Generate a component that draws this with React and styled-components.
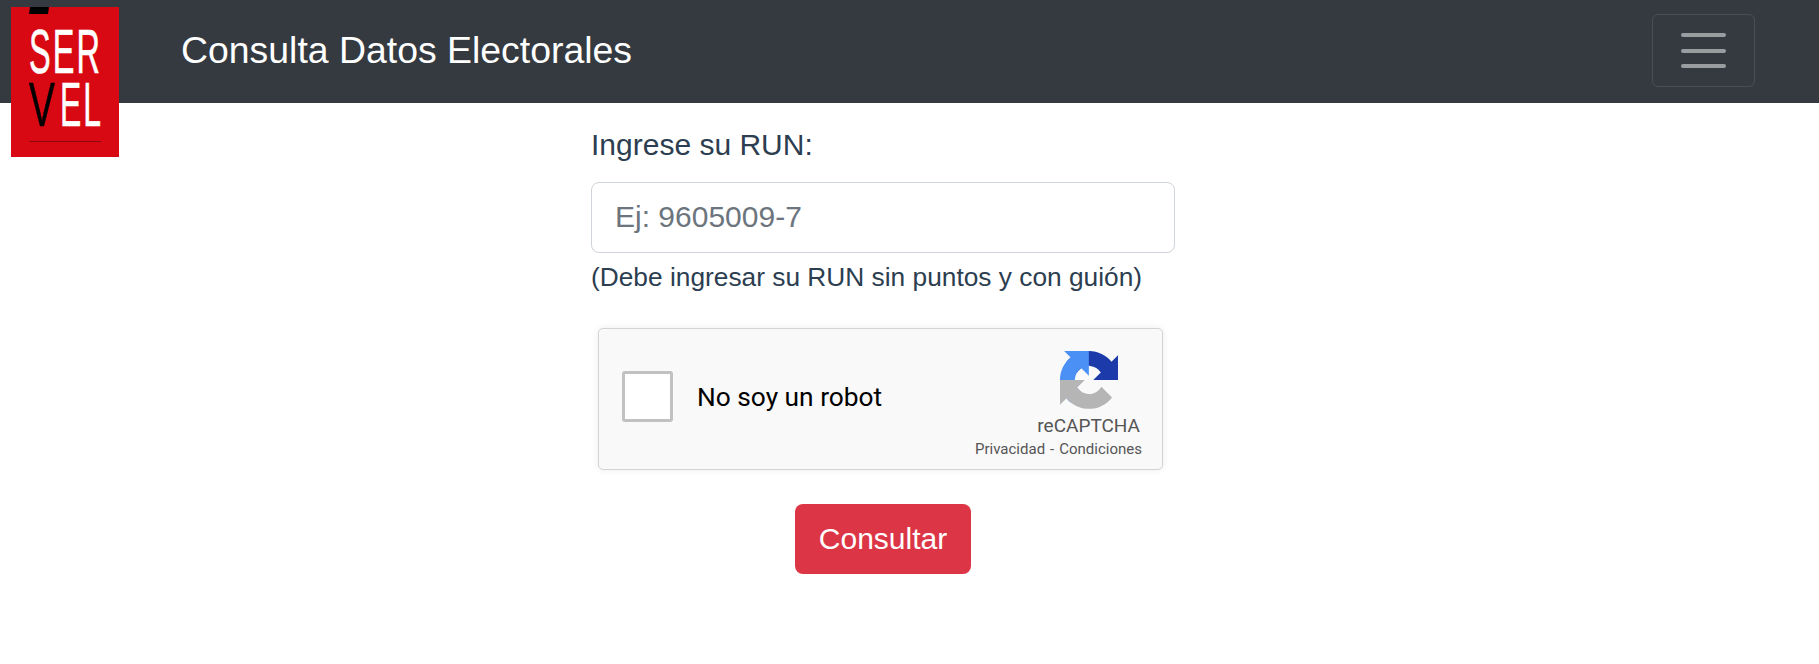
import React from "react";
import styled, { createGlobalStyle } from "styled-components";

const GlobalStyle = createGlobalStyle`
	html, body {
		margin: 0;
		background: #ffffff;
		font-family: "Liberation Sans", Arial, sans-serif;
		color: #2c3e50;
	}
`;

const Navbar = styled.nav`
	display: flex;
	align-items: center;
	height: 103px;
	padding-left: 11px;
	background: #343a40;
`;

const LogoBox = styled.svg`
	align-self: flex-start;
	flex: none;
	width: 108px;
	height: 150px;
	margin-top: 7px;
	position: relative;
`;

const LogoText = styled.text`
	font-family: "Liberation Sans Narrow", "Liberation Sans", sans-serif;
	font-size: 63px;
	letter-spacing: ${(props) => props.$spacing || 0}px;
	fill: ${(props) => (props.$dark ? "#000000" : "#ffffff")};
	stroke: ${(props) => (props.$dark ? "#000000" : "#ffffff")};
	stroke-width: 0.6px;
`;

const Brand = styled.div`
	margin-left: 62px;
	margin-bottom: 2px;
	color: #ffffff;
	font-size: 37.4px;
	white-space: nowrap;
`;

const Toggler = styled.button`
	display: flex;
	flex-direction: column;
	justify-content: center;
	align-items: center;
	gap: 11.5px;
	width: 103px;
	height: 73px;
	margin-left: auto;
	margin-right: 64px;
	margin-bottom: 2px;
	padding: 0;
	background: transparent;
	border: 1px solid rgba(255, 255, 255, 0.1);
	border-radius: 6px;
`;

const TogglerBar = styled.span`
	display: block;
	width: 45px;
	height: 4px;
	border-radius: 2px;
	background: rgba(255, 255, 255, 0.5);
`;

const Main = styled.main`
	display: flex;
	flex-direction: column;
	width: 584px;
	margin-left: 591px;
	padding-top: 23px;
`;

const Label = styled.label`
	font-size: 30px;
	line-height: 38px;
`;

const RunInput = styled.input`
	box-sizing: border-box;
	width: 100%;
	height: 71px;
	margin-top: 18px;
	padding: 0 23px 2px;
	border: 1px solid #ced4da;
	border-radius: 8px;
	font-family: inherit;
	font-size: 30px;
	color: #495057;
	&::placeholder {
		color: #6c757d;
		opacity: 1;
	}
`;

const Help = styled.div`
	margin-top: 6px;
	font-size: 26.3px;
	line-height: 36px;
`;

const Captcha = styled.div`
	box-sizing: border-box;
	display: flex;
	align-items: center;
	width: 565px;
	height: 142px;
	margin: 33px 0 0 7px;
	padding-left: 23px;
	background: #f9f9f9;
	border: 1px solid #d3d3d3;
	border-radius: 5px;
	box-shadow: 0 0 7px rgba(0, 0, 0, 0.08);
	font-family: Roboto, sans-serif;
`;

const CaptchaBox = styled.div`
	box-sizing: border-box;
	flex: none;
	width: 51px;
	height: 51px;
	margin-bottom: 6px;
	background: #ffffff;
	border: 3px solid #c1c1c1;
	border-radius: 3px;
`;

const CaptchaLabel = styled.div`
	margin-left: 24px;
	margin-bottom: 4px;
	font-size: 26.3px;
	color: #000000;
`;

const CaptchaBrand = styled.div`
	display: flex;
	flex-direction: column;
	margin-left: auto;
	margin-right: 20px;
	margin-top: 11px;
	color: #555555;
`;

const CaptchaIcon = styled.svg`
	align-self: flex-end;
	width: 58px;
	height: 58px;
	margin-right: 24px;
`;

const CaptchaName = styled.div`
	margin-top: 5px;
	margin-right: 2px;
	align-self: flex-end;
	font-size: 19px;
	line-height: 24px;
`;

const CaptchaLinks = styled.div`
	display: flex;
	justify-content: space-between;
	width: 167px;
	margin-top: 1px;
	font-size: 15px;
	line-height: 20px;
	white-space: nowrap;
`;

const SubmitRow = styled.div`
	display: flex;
	justify-content: center;
	margin-top: 34px;
`;

const SubmitButton = styled.button`
	width: 176px;
	height: 70px;
	padding: 0;
	border: none;
	border-radius: 8px;
	background: #dc3545;
	color: #ffffff;
	font-family: inherit;
	font-size: 30px;
`;

const Logo = () => (
	<LogoBox viewBox="0 0 108 150">
		<rect width="108" height="150" fill="#d90913" />
		<polygon points="19,0 38,0 37,7 18,7" fill="#000000" />
		<LogoText $spacing={4} x="18" y="66" textLength="73" lengthAdjust="spacingAndGlyphs">SER</LogoText>
		<LogoText $dark x="18" y="119" textLength="26" lengthAdjust="spacingAndGlyphs">V</LogoText>
		<LogoText $spacing={4} x="49" y="119" textLength="43" lengthAdjust="spacingAndGlyphs">EL</LogoText>
		<rect x="18" y="134" width="72" height="1" fill="#8a0a10" />
	</LogoBox>
);

const RecaptchaIcon = () => (
	<CaptchaIcon viewBox="0 0 64 64">
		<path d="M64 31.955l-.033-1.37V4.687l-7.16 7.16C50.948 4.674 42.033.093 32.05.093c-10.4 0-19.622 4.96-25.458 12.64l11.736 11.86a15.55 15.55 0 0 1 4.754-5.334c2.05-1.6 4.952-2.906 8.968-2.906.485 0 .86.057 1.135.163 4.976.393 9.288 3.14 11.828 7.124l-8.307 8.307 32.3.01" fill="#1c3aa9" />
		<path d="M31.862 0l-1.37.033H4.594l7.16 7.16C4.58 13.052 0 21.967 0 31.95c0 10.4 4.96 19.622 12.64 25.458l11.86-11.736a15.55 15.55 0 0 1-5.334-4.754c-1.6-2.05-2.906-4.952-2.906-8.968 0-.485.057-.86.163-1.135.393-4.976 3.14-9.288 7.124-11.828l8.307 8.307.01-32.3" fill="#4a90f5" />
		<path d="M.001 31.955l.033 1.37v25.9l7.16-7.16c5.86 7.173 14.774 11.754 24.76 11.754 10.4 0 19.622-4.96 25.458-12.64l-11.736-11.86a15.55 15.55 0 0 1-4.754 5.334c-2.05 1.6-4.952 2.906-8.968 2.906-.485 0-.86-.057-1.135-.163-4.976-.393-9.288-3.14-11.828-7.124l8.307-8.307-32.3-.01" fill="#b5b5b5" />
	</CaptchaIcon>
);

const App = () => {
	return (
		<>
			<GlobalStyle />
			<Navbar>
				<Logo />
				<Brand>Consulta Datos Electorales</Brand>
				<Toggler aria-label="menu">
					<TogglerBar />
					<TogglerBar />
					<TogglerBar />
				</Toggler>
			</Navbar>
			<Main>
				<Label htmlFor="run">Ingrese su RUN:</Label>
				<RunInput id="run" placeholder="Ej: 9605009-7" />
				<Help>(Debe ingresar su RUN sin puntos y con guión)</Help>
				<Captcha>
					<CaptchaBox />
					<CaptchaLabel>No soy un robot</CaptchaLabel>
					<CaptchaBrand>
						<RecaptchaIcon />
						<CaptchaName>reCAPTCHA</CaptchaName>
						<CaptchaLinks>
							<span>Privacidad</span>
							<span>-</span>
							<span>Condiciones</span>
						</CaptchaLinks>
					</CaptchaBrand>
				</Captcha>
				<SubmitRow>
					<SubmitButton>Consultar</SubmitButton>
				</SubmitRow>
			</Main>
		</>
	);
};

export default App;
